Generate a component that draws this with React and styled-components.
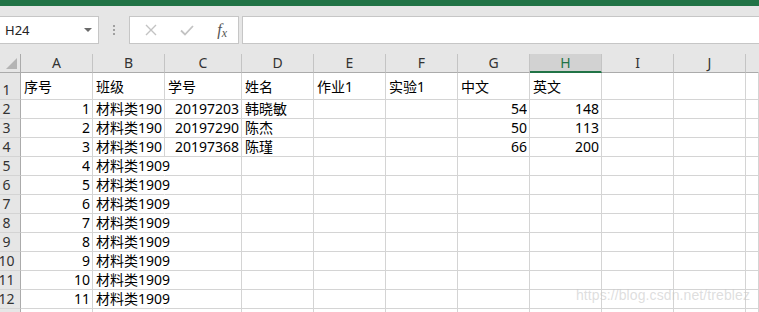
import React from 'react';
import styled, {createGlobalStyle} from "styled-components";

const GlobalStyle = createGlobalStyle`
  html, body {
    margin: 0;
    padding: 0;
    background: #fff;
    overflow: hidden;
  }
  body {
    font-family: "Noto Sans", "Noto Sans CJK SC", sans-serif;
  }
`;

const COLS = ['A', 'B', 'C', 'D', 'E', 'F', 'G', 'H', 'I', 'J'];

// each row: [A, B, C, D, E, F, G, H]
const ROWS = [
    ['序号', '班级', '学号', '姓名', '作业1', '实验1', '中文', '英文'],
    [1, '材料类1909', 20197203, '韩晓敏', '', '', 54, 148],
    [2, '材料类1909', 20197290, '陈杰', '', '', 50, 113],
    [3, '材料类1909', 20197368, '陈瑾', '', '', 66, 200],
    [4, '材料类1909'],
    [5, '材料类1909'],
    [6, '材料类1909'],
    [7, '材料类1909'],
    [8, '材料类1909'],
    [9, '材料类1909'],
    [10, '材料类1909'],
    [11, '材料类1909'],
    [],
];

const App = () => {
    return (
        <StyledComponent>
            <GlobalStyle/>
            <TitleBar/>

            <Toolbar>
                <NameBox>
                    <span>H24</span>
                    <DropArrow/>
                </NameBox>
                <Grip>
                    <i/><i/><i/>
                </Grip>
                <FxBox>
                    <svg width="12" height="12" viewBox="0 0 12 12">
                        <path d="M1 1L11 11M11 1L1 11" stroke="#c3c3c3" strokeWidth="1.4" fill="none"/>
                    </svg>
                    <svg width="14" height="11" viewBox="0 0 14 11">
                        <path d="M1 5.5L5 9.5L13 1" stroke="#c3c3c3" strokeWidth="1.8" fill="none"/>
                    </svg>
                    <FxLabel>f<sub>x</sub></FxLabel>
                </FxBox>
                <FormulaInput/>
            </Toolbar>

            <Sheet>
                <Corner/>
                {COLS.map(c => (
                    <ColHead key={c} $active={c === 'H'}>{c}</ColHead>
                ))}
                <ColHead $filler/>

                {ROWS.map((row, r) => {
                    const cells = [];
                    cells.push(<RowHead key={'h' + r}><span>{r + 1}</span></RowHead>);
                    COLS.forEach((c, i) => {
                        const v = row[i];
                        const isNum = typeof v === 'number';
                        const spill = i === 1 && r >= 4;
                        cells.push(
                            <Cell key={c + r} $first={r === 0} $num={isNum} $spill={spill}>
                                {v !== undefined && v !== '' && <CellText $spill={spill}>{v}</CellText>}
                            </Cell>
                        );
                    });
                    cells.push(<Cell key={'f' + r} $first={r === 0}/>);
                    return cells;
                })}
            </Sheet>

            <Watermark>https://blog.csdn.net/treblez</Watermark>
        </StyledComponent>
    );
};

const StyledComponent = styled.div`
  position: relative;
  width: 759px;
  height: 312px;
  overflow: hidden;
  background: #fff;
`;

const TitleBar = styled.div`
  height: 6px;
  background: #217346;
`;

const Toolbar = styled.div`
  display: flex;
  align-items: center;
  background: #e6e6e6;
  padding: 10px 0;
`;

const NameBox = styled.div`
  box-sizing: border-box;
  width: 99px;
  height: 28px;
  display: flex;
  align-items: center;
  justify-content: space-between;
  padding: 0 6px 0 5px;
  background: #fff;
  border: 1px solid #c6c6c6;
  border-left: none;
  font-size: 13px;
  color: #222;
`;

const DropArrow = styled.div`
  width: 0;
  height: 0;
  border-left: 4px solid transparent;
  border-right: 4px solid transparent;
  border-top: 4px solid #6a6a6a;
`;

const Grip = styled.div`
  width: 30px;
  display: flex;
  flex-direction: column;
  align-items: center;
  gap: 2px;

  i {
    display: block;
    width: 2px;
    height: 2px;
    background: #a0a0a0;
  }
`;

const FxBox = styled.div`
  box-sizing: border-box;
  width: 110px;
  height: 28px;
  display: flex;
  align-items: center;
  justify-content: space-between;
  padding: 0 11px 0 15px;
  background: #fff;
  border: 1px solid #c6c6c6;
`;

const FxLabel = styled.span`
  font-family: "Liberation Serif", serif;
  font-style: italic;
  font-size: 16px;
  color: #555;
  line-height: 1;

  sub {
    font-size: 12px;
    vertical-align: -2px;
  }
`;

const FormulaInput = styled.div`
  box-sizing: border-box;
  flex: 1;
  height: 28px;
  margin-left: 3px;
  margin-right: -2px;
  background: #fff;
  border: 1px solid #c6c6c6;
`;

const Sheet = styled.div`
  display: grid;
  grid-template-columns: 21px 72px 72px 77px repeat(7, 72px) 1fr;
  grid-template-rows: 19px 27px;
  grid-auto-rows: 19px;
  font-size: 14px;
  color: #000;
`;

const Corner = styled.div`
  position: relative;
  box-sizing: border-box;
  background: #e6e6e6;
  border-right: 1px solid #ababab;
  border-bottom: 1px solid #ababab;

  &::after {
    content: '';
    position: absolute;
    right: 3px;
    bottom: 3px;
    width: 0;
    height: 0;
    border-left: 11px solid transparent;
    border-bottom: 11px solid #b4b4b4;
  }
`;

const ColHead = styled.div`
  box-sizing: border-box;
  display: flex;
  align-items: center;
  justify-content: center;
  background: ${p => p.$active ? '#d2d2d2' : '#e6e6e6'};
  color: ${p => p.$active ? '#217346' : '#333'};
  border-right: 1px solid ${p => p.$filler ? 'transparent' : '#c4c4c4'};
  border-bottom: ${p => p.$active ? '2px solid #217346' : '1px solid #ababab'};
  padding-top: ${p => p.$active ? '1px' : '0'};
  font-size: 14px;
  line-height: 1;
`;

const RowHead = styled.div`
  box-sizing: border-box;
  display: flex;
  align-items: flex-end;
  justify-content: center;
  padding: 0 7px 0 0;
  overflow: hidden;
  background: #e6e6e6;
  color: #333;
  border-right: 1px solid #ababab;
  border-bottom: 1px solid #d4d4d4;
  line-height: 18px;

  span {
    white-space: nowrap;
    flex-shrink: 0;
  }
`;

const Cell = styled.div`
  box-sizing: border-box;
  position: relative;
  z-index: ${p => p.$spill ? 1 : 0};
  display: flex;
  align-items: flex-end;
  justify-content: ${p => p.$num ? 'flex-end' : 'flex-start'};
  padding: 0 2px ${p => p.$first ? '3px' : '0'} 3px;
  white-space: nowrap;
  min-width: 0;
  border-right: 1px solid ${p => p.$spill ? 'transparent' : '#d4d4d4'};
  border-bottom: 1px solid #d4d4d4;
  line-height: 18px;
`;

const CellText = styled.span`
  display: block;
  overflow: ${p => p.$spill ? 'visible' : 'hidden'};
  min-width: 0;
  flex-shrink: ${p => p.$spill ? 0 : 1};
`;

const Watermark = styled.div`
  position: absolute;
  right: 9px;
  bottom: 9px;
  font-family: "Liberation Sans", Arial, sans-serif;
  font-size: 14px;
  color: rgba(200, 200, 200, 0.6);
  letter-spacing: 0.1px;
  pointer-events: none;
`;

export default App;
